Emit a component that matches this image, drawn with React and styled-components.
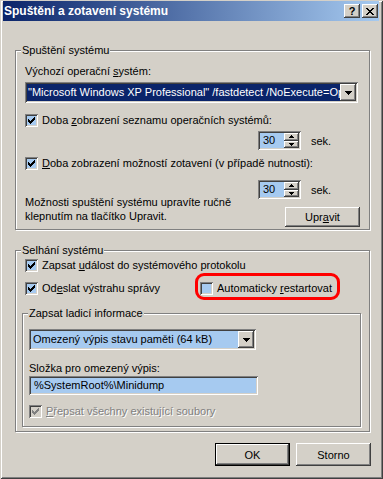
import React from 'react';
import styled, { createGlobalStyle, css } from 'styled-components';

const GlobalStyle = createGlobalStyle`
  html, body {
    margin: 0;
    padding: 0;
    background: #d4d0c8;
  }
  body {
    font-family: "Liberation Sans", Arial, sans-serif;
    font-size: 11px;
    color: #000;
  }
`;

const sunken = css`
  box-shadow: inset 1px 1px #808080, inset -1px -1px #ffffff, inset 2px 2px #404040,
    inset -2px -2px #d4d0c8;
`;

const raised = css`
  box-shadow: inset -1px -1px #404040, inset 1px 1px #ffffff, inset -2px -2px #808080,
    inset 2px 2px #d4d0c8;
`;

const Window = styled.div`
  box-sizing: border-box;
  width: 383px;
  height: 479px;
  padding: 1px 4px 0 3px;
  background: #d4d0c8;
  box-shadow: inset 1px 1px #d4d0c8, inset -1px -1px #404040, inset 2px 2px #ffffff,
    inset -2px -2px #808080;
  overflow: hidden;
`;

const TitleBar = styled.div`
  height: 20px;
  display: flex;
  align-items: center;
  padding: 0 1px 0 1px;
  background: linear-gradient(to right, #0a246a, #a6caf0);
  color: #fff;
  font-weight: bold;
  font-size: 12px;
`;

const Title = styled.span`
  flex: 1;
  white-space: nowrap;
`;

const CapButton = styled.div`
  width: 16px;
  height: 14px;
  margin-left: 2px;
  box-sizing: border-box;
  display: flex;
  align-items: center;
  justify-content: center;
  background: #d4d0c8;
  color: #000;
  font-size: 11px;
  font-weight: bold;
  line-height: 14px;
  ${raised};
`;

const Body = styled.div`
  padding: 29px 0 0 12px;
`;

const Group = styled.div`
  position: relative;
  box-sizing: border-box;
  width: ${p => p.$w}px;
  margin-top: ${p => p.$mt || 0}px;
  margin-left: ${p => p.$ml || 0}px;
  padding: ${p => p.$pad};
  border: 1px solid #808080;
  box-shadow: inset 1px 1px #ffffff, 1px 1px #ffffff;
`;

const Caption = styled.span`
  position: absolute;
  top: -7px;
  left: 5px;
  padding: 0 1px;
  background: #d4d0c8;
  line-height: 13px;
  white-space: nowrap;
`;

const Label = styled.div`
  line-height: 13px;
  margin-top: ${p => p.$mt || 0}px;
  white-space: nowrap;
`;

const Combo = styled.div`
  box-sizing: border-box;
  width: ${p => p.$w}px;
  height: 21px;
  margin-top: ${p => p.$mt || 0}px;
  padding: 2px;
  display: flex;
  background: #a6caf0;
  ${sunken};
`;

const ComboField = styled.div`
  flex: 1;
  min-width: 0;
  overflow: hidden;
  white-space: nowrap;
  line-height: 17px;
  padding-left: ${p => (p.$selected ? 1 : 2)}px;
  background: ${p => (p.$selected ? '#0a246a' : 'transparent')};
  color: ${p => (p.$selected ? '#fff' : '#000')};
`;

const DropButton = styled.div`
  width: 16px;
  height: 17px;
  flex: none;
  box-sizing: border-box;
  display: flex;
  align-items: center;
  justify-content: center;
  background: #d4d0c8;
  ${raised};
`;

const CheckRow = styled.div`
  display: flex;
  align-items: center;
  height: 13px;
  margin-top: ${p => p.$mt || 0}px;
  margin-left: ${p => p.$ml || 0}px;
  white-space: nowrap;
  color: ${p => (p.$disabled ? '#808080' : '#000')};
  text-shadow: ${p => (p.$disabled ? '1px 1px #ffffff' : 'none')};
`;

const Box = styled.span`
  width: 13px;
  height: 13px;
  flex: none;
  box-sizing: border-box;
  display: flex;
  align-items: center;
  justify-content: center;
  margin-right: 4px;
  background: ${p => (p.$disabled ? '#d4d0c8' : '#a6caf0')};
  ${sunken};
`;

const CheckText = styled.span`
  line-height: 13px;
`;

const SpinRow = styled.div`
  display: flex;
  align-items: center;
  gap: 10px;
  margin-top: ${p => p.$mt || 0}px;
  margin-left: 233px;
`;

const Spin = styled.div`
  box-sizing: border-box;
  width: 43px;
  height: 19px;
  padding: 2px;
  display: flex;
  background: #a6caf0;
  ${sunken};
`;

const SpinValue = styled.span`
  flex: 1;
  padding-left: 3px;
  line-height: 15px;
`;

const SpinButtons = styled.div`
  width: 15px;
  display: flex;
  flex-direction: column;
`;

const SpinButton = styled.div`
  flex: 1;
  display: flex;
  align-items: center;
  justify-content: center;
  background: #d4d0c8;
  ${raised};
`;

const BottomRow = styled.div`
  display: flex;
  justify-content: space-between;
  align-items: flex-start;
  margin-top: -4px;
`;

const Note = styled.div`
  line-height: 14px;
`;

const Button = styled.div`
  box-sizing: border-box;
  width: 75px;
  height: ${p => p.$h || 23}px;
  margin-top: ${p => p.$mt || 0}px;
  display: flex;
  align-items: center;
  justify-content: center;
  background: #d4d0c8;
  ${raised};
  ${p =>
    p.$default &&
    css`
      box-shadow: inset 0 0 0 1px #000, inset -2px -2px #404040, inset 2px 2px #ffffff,
        inset -3px -3px #808080;
    `}
`;

const TwoCols = styled.div`
  display: grid;
  grid-template-columns: 175px auto;
  margin-top: ${p => p.$mt || 0}px;
  margin-left: 3px;
`;

const Callout = styled.div`
  position: relative;
  justify-self: start;

  &::after {
    content: '';
    position: absolute;
    top: -9px;
    bottom: -5px;
    left: -5px;
    right: -8px;
    border: 3px solid #ff0000;
    border-radius: 9px;
    pointer-events: none;
  }
`;

const TextInput = styled.div`
  box-sizing: border-box;
  width: 229px;
  height: 19px;
  margin-top: ${p => p.$mt || 0}px;
  padding: 2px 0 0 5px;
  line-height: 15px;
  background: #a6caf0;
  white-space: nowrap;
  ${sunken};
`;

const Footer = styled.div`
  width: 356px;
  margin-top: 11px;
  display: flex;
  justify-content: flex-end;
  gap: 6px;
`;

const CheckMark = ({ color }) => (
  <svg width="7" height="7" viewBox="0 0 7 7" shapeRendering="crispEdges">
    <path
      fill={color}
      d="M6 0h1v1h-1z M5 1h2v1h-2z M0 2h1v1h-1z M4 2h3v1h-3z M0 3h2v1h-2z M3 3h3v1h-3z M0 4h5v1h-5z M1 5h3v1h-3z M2 6h1v1h-1z"
    />
  </svg>
);

const Check = ({ checked, disabled, children, mt, ml }) => (
  <CheckRow $mt={mt} $ml={ml} $disabled={disabled}>
    <Box $disabled={disabled}>{checked && <CheckMark color={disabled ? '#808080' : '#000'} />}</Box>
    <CheckText>{children}</CheckText>
  </CheckRow>
);

const DownArrow = () => (
  <svg width="7" height="4" viewBox="0 0 7 4" shapeRendering="crispEdges">
    <path d="M0 0h7v1h-7z M1 1h5v1h-5z M2 2h3v1h-3z M3 3h1v1h-1z" fill="#000" />
  </svg>
);

const SmallArrow = ({ up }) => (
  <svg width="5" height="3" viewBox="0 0 5 3" shapeRendering="crispEdges">
    <path
      d={up ? 'M2 0h1v1h-1z M1 1h3v1h-3z M0 2h5v1h-5z' : 'M0 0h5v1h-5z M1 1h3v1h-3z M2 2h1v1h-1z'}
      fill="#000"
    />
  </svg>
);

const CloseGlyph = () => (
  <svg width="8" height="7" viewBox="0 0 8 7" shapeRendering="crispEdges">
    <path
      d="M0 0h2v1h-2z M6 0h2v1h-2z M1 1h2v1h-2z M5 1h2v1h-2z M2 2h4v1h-4z M3 3h2v1h-2z M2 4h4v1h-4z M1 5h2v1h-2z M5 5h2v1h-2z M0 6h2v1h-2z M6 6h2v1h-2z"
      fill="#000"
    />
  </svg>
);

const Spinner = ({ value, mt }) => (
  <SpinRow $mt={mt}>
    <Spin>
      <SpinValue>{value}</SpinValue>
      <SpinButtons>
        <SpinButton>
          <SmallArrow up />
        </SpinButton>
        <SpinButton>
          <SmallArrow />
        </SpinButton>
      </SpinButtons>
    </Spin>
    <span>sek.</span>
  </SpinRow>
);

export default function App() {
  return (
    <>
      <GlobalStyle />
      <Window>
        <TitleBar>
          <Title>Spuštění a zotavení systému</Title>
          <CapButton>?</CapButton>
          <CapButton>
            <CloseGlyph />
          </CapButton>
        </TitleBar>
        <Body>
          <Group $w={355} $pad="14px 9px 2px 9px">
            <Caption>Spuštění systému</Caption>
            <Label>
              Výchozí operační <u>s</u>ystém:
            </Label>
            <Combo $w={333} $mt={4}>
              <ComboField $selected>
                "Microsoft Windows XP Professional" /fastdetect /NoExecute=OptIn
              </ComboField>
              <DropButton>
                <DownArrow />
              </DropButton>
            </Combo>
            <Check checked mt={11}>
              Doba <u>z</u>obrazení seznamu operačních systémů:
            </Check>
            <Spinner value="30" mt={4} />
            <Check checked mt={7}>
              <u>D</u>oba zobrazení možností zotavení (v případě nutnosti):
            </Check>
            <Spinner value="30" mt={10} />
            <BottomRow>
              <Note>
                Možnosti spuštění systému upravíte ručně
                <br />
                klepnutím na tlačítko Upravit.
              </Note>
              <Button $h={20} $mt={12}>
                <span>
                  Upr<u>a</u>vit
                </span>
              </Button>
            </BottomRow>
          </Group>

          <Group $w={355} $mt={20} $pad="8px 8px 4px 6px">
            <Caption>Selhání systému</Caption>
            <Check checked ml={3}>
              Zapsat <u>u</u>dálost do systémového protokolu
            </Check>
            <TwoCols $mt={10}>
              <Check checked>
                Od<u>e</u>slat výstrahu správy
              </Check>
              <Callout>
                <Check>
                  Automaticky <u>r</u>estartovat
                </Check>
              </Callout>
            </TwoCols>
            <Group $w={339} $mt={18} $pad="15px 6px 8px 6px">
              <Caption>Zapsat ladicí informace</Caption>
              <Combo $w={227}>
                <ComboField>Omezený výpis stavu paměti (64 kB)</ComboField>
                <DropButton>
                  <DownArrow />
                </DropButton>
              </Combo>
              <Label $mt={12}>Složka pro omezený výpis:</Label>
              <TextInput $mt={1}>%SystemRoot%\Minidump</TextInput>
              <Check checked disabled mt={10}>
                <u>P</u>řepsat všechny existující soubory
              </Check>
            </Group>
          </Group>

          <Footer>
            <Button $default>OK</Button>
            <Button>Storno</Button>
          </Footer>
        </Body>
      </Window>
    </>
  );
}
